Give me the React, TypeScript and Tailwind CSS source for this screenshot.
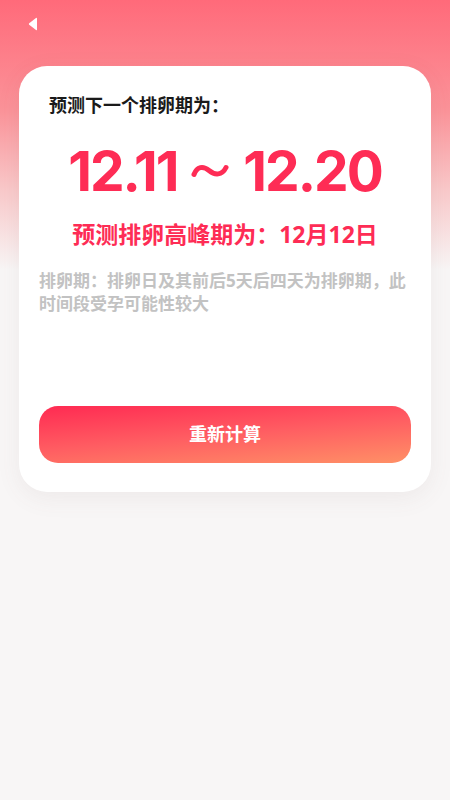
import React from "react";

const cjk = { fontFamily: '"Noto Sans", "Noto Sans CJK SC", sans-serif' };
const num = { fontFamily: 'Inter, "Noto Sans CJK SC", sans-serif' };

export default function App() {
  return (
    <div className="min-h-[800px] w-full bg-[#f8f6f6]" style={cjk}>
      <div className="bg-[linear-gradient(180deg,#ff6a7a_0px,#fb9399_110px,#f9c9ca_190px,#f8f6f6_270px)] pb-[308px]">
        <div className="flex h-[66px] items-start px-[28px] pt-[16px]">
          <button type="button" className="flex h-[16px] w-[12px] items-center">
            <svg width="10" height="14" viewBox="0 0 10 14">
              <path d="M9 1.5 L9 12.5 Q9 13.6 8 13 L1.2 7.8 Q0.4 7 1.2 6.2 L8 1 Q9 0.4 9 1.5 Z" fill="#fff" />
            </svg>
          </button>
        </div>

        <section className="mx-[19px] rounded-[28px] bg-white px-[20px] pt-[27px] pb-[29px] shadow-[0_6px_24px_rgba(120,90,90,0.08)]">
          <h2 className="pl-[10px] text-[18px] leading-[24px] font-bold text-[#1a1a1a]">
            预测下一个排卵期为：
          </h2>

          <p
            className="mt-[22px] flex items-center justify-center text-[55px] leading-[64px] font-bold tracking-[-2px] text-[#fe2c55]"
            style={num}
          >
            <span>12.11</span>
            <span className="mx-[14px] inline-flex w-[38px] items-center justify-center">
              <svg width="38" height="20" viewBox="0 0 38 20">
                <path
                  d="M3 13.5 C6 5.5 12 4.5 18 9.5 C24 14.5 31 14.5 35 6.5"
                  fill="none"
                  stroke="#fe2c55"
                  strokeWidth="5"
                  strokeLinecap="round"
                />
              </svg>
            </span>
            <span>12.20</span>
          </p>

          <p className="mt-[16px] text-center text-[23px] leading-[30px] font-bold text-[#fe2c55]">
            预测排卵高峰期为：12月12日
          </p>

          <p className="mt-[20px] text-[17px] leading-[23px] font-bold text-[#c2c2c2]">
            排卵期：排卵日及其前后5天后四天为排卵期，此时间段受孕可能性较大
          </p>

          <button
            type="button"
            className="mt-[91px] flex h-[57px] w-full items-center justify-center rounded-[19px] bg-[linear-gradient(175deg,#ff2a52_0%,#ff5d62_50%,#ff9066_100%)] text-[18px] font-bold text-white"
          >
            重新计算
          </button>
        </section>
      </div>
    </div>
  );
}
